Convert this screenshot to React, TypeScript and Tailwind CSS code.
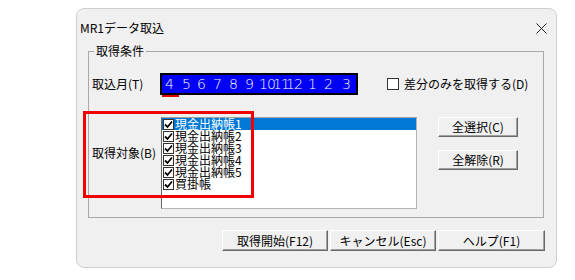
import React from 'react'

const FONT = { fontFamily: '"Noto Sans CJK JP", "Noto Sans", sans-serif' }

// month cells, widths read off the screenshot
const MONTHS: { label: string; w: number }[] = [
  { label: '4', w: 17 },
  { label: '5', w: 15 },
  { label: '6', w: 16 },
  { label: '7', w: 16 },
  { label: '8', w: 16 },
  { label: '9', w: 14 },
  { label: '10', w: 14 },
  { label: '11', w: 13 },
  { label: '12', w: 22 },
  { label: '1', w: 16 },
  { label: '2', w: 18 },
  { label: '3', w: 12 },
]

const ITEMS = ['現金出納帳1', '現金出納帳2', '現金出納帳3', '現金出納帳4', '現金出納帳5', '買掛帳']

function CheckMark() {
  return (
    <svg width="9" height="9" viewBox="0 0 9 9">
      <path d="M1 4.5 L3.5 7 L8 1.5" fill="none" stroke="#000" strokeWidth="1.8" />
    </svg>
  )
}

function ListCheck() {
  return (
    <span className="flex h-[11px] w-[11px] shrink-0 items-center justify-center border border-[#333] bg-white">
      <CheckMark />
    </span>
  )
}

function WinButton({ children, className }: { children: React.ReactNode; className?: string }) {
  return (
    <button
      className={
        'flex items-center justify-center border border-t-white border-l-white border-r-[#696969] border-b-[#696969] bg-[#f0f0f0] text-[12px] leading-[12px] text-black shadow-[inset_-1px_-1px_0_#a0a0a0] ' +
        (className ?? '')
      }
    >
      {children}
    </button>
  )
}

export default function App() {
  return (
    <div className="h-[280px] w-[575px] bg-white pl-[76px] pt-[8px]" style={FONT}>
      <div className="relative flex h-[260px] w-[481px] flex-col rounded-[8px] border border-[#cfcfcf] bg-[#f0f0f0]">
        {/* title bar */}
        <div className="flex h-[26px] items-end justify-between pl-[3px] pr-[9px]">
          <span className="text-[12px] leading-[14px] text-black">MR1データ取込</span>
          <svg width="11" height="11" viewBox="0 0 11 11" className="mb-[1px]">
            <path d="M0.5 0.5 L10.5 10.5 M10.5 0.5 L0.5 10.5" stroke="#222" strokeWidth="1" />
          </svg>
        </div>

        {/* group box */}
        <div className="relative ml-[11px] mt-[16px] h-[167px] w-[456px] border border-[#a8a8a8]">
          <span className="absolute left-[5px] top-[-8px] bg-[#f0f0f0] px-[2px] text-[12px] leading-[14px] text-black">
            取得条件
          </span>

          {/* month row */}
          <div className="ml-[3px] mt-[21px] flex h-[22px] items-center">
            <span className="w-[68px] text-[12px] leading-[14px] text-black">取込月(T)</span>
            <div className="relative flex h-[22px] w-[198px] items-center border-2 border-black bg-[#0000f5] pl-[3px]">
              {MONTHS.map((m, i) => (
                <span
                  key={i}
                  className="shrink-0 text-[14px] font-extralight leading-[16px] tracking-[-1px] text-white"
                  style={{ width: m.w, fontFamily: '"DejaVu Sans", sans-serif' }}
                >
                  {m.label}
                </span>
              ))}
              <span className="absolute bottom-[-4px] left-[0px] h-[2px] w-[17px] bg-[#e00000]" />
            </div>
            <span className="ml-[29px] h-[12px] w-[12px] border border-[#333] bg-white" />
            <span className="ml-[5px] text-[12px] leading-[14px] text-black">差分のみを取得する(D)</span>
          </div>

          {/* target row */}
          <div className="ml-[3px] mt-[22px] flex">
            <span className="mt-[29px] w-[69px] text-[12px] leading-[14px] text-black">取得対象(B)</span>
            <div className="flex h-[92px] w-[256px] flex-col border border-l-[#646464] border-t-[#a0a0a0] border-r-[#b4b4b4] border-b-[#b4b4b4] bg-white">
              {ITEMS.map((item, i) => (
                <div
                  key={item}
                  className={
                    'flex h-[12px] items-center gap-[1px] pl-[1px] text-[12px] leading-[12px] ' +
                    (i === 0 ? 'bg-[#0078d7] text-white' : 'text-black')
                  }
                >
                  <ListCheck />
                  <span>{item}</span>
                </div>
              ))}
            </div>
            <div className="ml-[21px] flex flex-col gap-[13px]">
              <WinButton className="h-[20px] w-[80px]">全選択(C)</WinButton>
              <WinButton className="h-[20px] w-[80px]">全解除(R)</WinButton>
            </div>
          </div>
        </div>

        {/* bottom buttons */}
        <div className="ml-[145px] mt-[12px] flex gap-[2px]">
          <WinButton className="h-[21px] w-[106px]">取得開始(F12)</WinButton>
          <WinButton className="h-[21px] w-[106px]">キャンセル(Esc)</WinButton>
          <WinButton className="h-[21px] w-[107px]">ヘルプ(F1)</WinButton>
        </div>

        {/* red annotation */}
        <div className="absolute left-[6px] top-[102px] h-[87px] w-[171px] border-[3px] border-[#f00000]" />
      </div>
    </div>
  )
}
